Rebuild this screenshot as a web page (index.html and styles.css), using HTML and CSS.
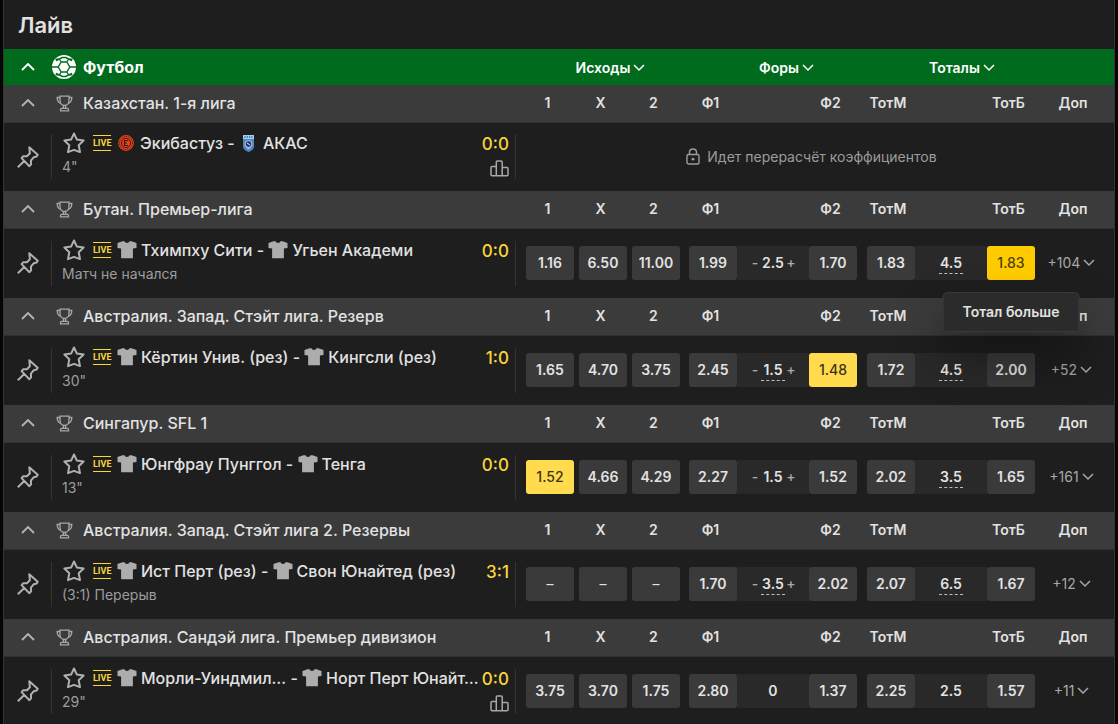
FILE: index.html
```html
<!DOCTYPE html>
<html lang="ru">
<head>
<meta charset="utf-8">
<meta name="viewport" content="width=device-width, initial-scale=1">
<title>Лайв</title>
<link rel="stylesheet" href="styles.css">
</head>
<body>
<svg class="sprite" aria-hidden="true">
  <symbol id="up" viewBox="0 0 14 8"><path d="M1 7l6-6 6 6" fill="none" stroke="currentColor" stroke-width="1.8"/></symbol>
  <symbol id="down" viewBox="0 0 12 8"><path d="M1 1l5 5 5-5" fill="none" stroke="currentColor" stroke-width="1.5"/></symbol>
  <symbol id="cup" viewBox="0 0 17 17"><g fill="none" stroke="currentColor" stroke-width="1.3"><path d="M4 1.2h9v4.3c0 3-2 5-4.500 5S4 8.500 4 5.500z"/><path d="M4 2.500H1.200c0 3.300 1 5.200 3.800 6M13 2.500h2.800c0 3.300-1 5.200-3.800 6M7.400 10.500v2.600M9.600 10.500v2.600M4.500 15.800v-1.300q0-1.200 1.200-1.200h5.600q1.200 0 1.200 1.200v1.300z"/></g></symbol>
  <symbol id="pin" viewBox="0 0 22 22"><path d="M12.300 1.300l8.400 7.500-1 1.700-2.900.7-2.900 3.400.2 3.700-1.700 1.900-7.800-8.100 1.700-1.900 3.600.1 3-3zM7.800 14.600l-7 6.600" fill="none" stroke="currentColor" stroke-width="2" stroke-linejoin="round"/></symbol>
  <symbol id="star" viewBox="0 0 22 22"><path d="M11 1.500l2.900 6.100 6.700.9-4.900 4.700 1.300 6.900-6-2.200-6 2.200 1.300-6.900L1.400 8.500l6.700-.9z" fill="none" stroke="currentColor" stroke-width="2" stroke-linejoin="round"/></symbol>
  <symbol id="shirt" viewBox="0 0 20 18"><path d="M5.500.3h2q.5 1.700 2.500 1.700T12.500.3h2L19.500 2v5l-3.600.4v9.900H4.100V7.400L.5 7V2z" fill="currentColor"/></symbol>
  <symbol id="bars" viewBox="0 0 19 17"><path d="M6.300 15.800V2q0-1 1-1h3.900q1 0 1 1v13.800M6.300 6.500H2q-1 0-1 1v7.300q0 1 1 1h15q1 0 1-1V8.500q0-1-1-1h-4.800" fill="none" stroke="currentColor" stroke-width="1.500"/></symbol>
</svg>
<main class="panel">
<h1 class="title">Лайв</h1>
<table class="line">
<colgroup><col><col class="c-odd"><col class="c-odd"><col class="c-odd"><col class="c-first"><col class="c-param"><col class="c-last"><col class="c-first2"><col class="c-param"><col class="c-last"><col class="c-more"></colgroup>
<thead>
<tr class="sport">
  <th><div class="heading"><button class="toggle" aria-label="Свернуть"><svg class="i-up"><use href="#up"/></svg></button><svg class="i-ball" viewBox="0 0 24 24"><circle cx="12" cy="12" r="12" fill="#fff"/><g fill="none" stroke="#006b1d" stroke-width="1.400"><path d="M9.200 7h5.600l3 5-3 5H9.200l-3-5zM9.200 7L7.300 4M14.800 7l1.900-3M17.800 12H24M14.800 17l1.900 3M9.200 17l-1.900 3M6.200 12H0M7.300 4l3-1.500h3.400l3 1.500M7.300 20l3 1.500h3.400l3-1.500M7.300 4L4 5.500M16.700 4L20 5.500M7.300 20L4 18.500M16.700 20l3.300-1.500"/></g><path d="M3.300 3.800l3.500-.6-2.600 3zM20.700 3.800l-3.500-.6 2.600 3zM3.300 20.200l3.500.6-2.600-3zM20.700 20.200l-3.500.6 2.600-3z" fill="#006b1d"/></svg><span>Футбол</span></div></th>
  <th colspan="3" class="g1"><button class="menu">Исходы<svg class="i-down"><use href="#down"/></svg></button></th>
  <th colspan="3" class="g2"><button class="menu">Форы<svg class="i-down"><use href="#down"/></svg></button></th>
  <th colspan="3" class="g3"><button class="menu">Тоталы<svg class="i-down"><use href="#down"/></svg></button></th>
  <th></th>
</tr>
</thead>
<tbody>
<tr class="league"><th><div class="heading"><button class="toggle" aria-label="Свернуть"><svg class="i-up"><use href="#up"/></svg></button><svg class="i-cup"><use href="#cup"/></svg><span>Казахстан. 1-я лига</span></div></th><th>1</th><th>X</th><th>2</th><th>Ф1</th><th></th><th>Ф2</th><th>ТотМ</th><th></th><th>ТотБ</th><th>Доп</th></tr>
<tr class="match closed"><td><div class="event"><button class="pin" aria-label="Закрепить"><svg><use href="#pin"/></svg></button><div class="info"><div class="names"><button class="star" aria-label="В избранное"><svg><use href="#star"/></svg></button><span class="live">LIVE</span><a href="#m1"><svg class="i-crest" viewBox="0 0 16 16"><circle cx="8" cy="8" r="7.900" fill="#e8431a"/><circle cx="8" cy="8" r="6.500" fill="none" stroke="#3a160e" stroke-width="1" stroke-dasharray="1.200 .8"/><circle cx="8" cy="8" r="4.600" fill="none" stroke="#3a160e" stroke-width="1"/><path d="M10 5.500H6.500v5H10M6.500 8H9" fill="none" stroke="#3a160e" stroke-width="1.200"/></svg><span>Экибастуз</span> - <svg class="i-shield" viewBox="0 0 11 17"><path d="M0 0h11v12q-.5 3-5.500 5Q.5 15 0 12z" fill="#4f86c4"/><path d="M0 0h11v4H0z" fill="#9fd0ee"/><path d="M2 1v2M4.300 1v2M6.700 1v2M9 1v2" stroke="#356aa8"/><circle cx="5.500" cy="9" r="3.400" fill="#25386d" stroke="#dce9f7" stroke-width=".8"/><path d="M4 8l3 2M4 12.500l1.500 1.500L7 12.500" stroke="#dce9f7" fill="none"/></svg><span class="away">АКАС</span></a></div><div class="state">4"</div></div><div class="result"><span class="score">0:0</span><button class="stats" aria-label="Статистика"><svg><use href="#bars"/></svg></button></div></div></td>
<td colspan="10"><div class="notice"><svg viewBox="0 0 14 17"><g fill="none" stroke="currentColor" stroke-width="1.400"><rect x="1" y="6.500" width="12" height="9.500" rx="1.500"/><path d="M3.500 6.500V4.200q0-3.200 3.500-3.200t3.500 3.200v2.300"/></g><circle cx="7" cy="11.200" r="1.400" fill="currentColor"/></svg>Идет перерасчёт коэффициентов</div></td></tr>
</tbody>
<tbody>
<tr class="league"><th><div class="heading"><button class="toggle" aria-label="Свернуть"><svg class="i-up"><use href="#up"/></svg></button><svg class="i-cup"><use href="#cup"/></svg><span>Бутан. Премьер-лига</span></div></th><th>1</th><th>X</th><th>2</th><th>Ф1</th><th></th><th>Ф2</th><th>ТотМ</th><th></th><th>ТотБ</th><th>Доп</th></tr>
<tr class="match"><td><div class="event"><button class="pin" aria-label="Закрепить"><svg><use href="#pin"/></svg></button><div class="info"><div class="names"><button class="star" aria-label="В избранное"><svg><use href="#star"/></svg></button><span class="live">LIVE</span><a href="#m2"><svg class="i-shirt"><use href="#shirt"/></svg><span>Тхимпху Сити</span> - <svg class="i-shirt"><use href="#shirt"/></svg><span>Угьен Академи</span></a></div><div class="state">Матч не начался</div></div><div class="result"><span class="score">0:0</span></div></div></td>
<td><button class="odd">1.16</button></td><td><button class="odd">6.50</button></td><td><button class="odd">11.00</button></td>
<td><button class="odd">1.99</button></td><td><div class="param"><button class="step" aria-label="Меньше">-</button><span class="value">2.5</span><button class="step" aria-label="Больше">+</button></div></td><td><button class="odd">1.70</button></td>
<td><button class="odd">1.83</button></td><td><div class="param"><button class="value pick">4.5</button></div></td><td><div class="hovered"><button class="odd hot" aria-describedby="tip">1.83</button><div class="tip" id="tip" role="tooltip">Тотал больше</div></div></td>
<td><button class="more">+104<svg class="i-down"><use href="#down"/></svg></button></td></tr>
</tbody>
<tbody>
<tr class="league"><th><div class="heading"><button class="toggle" aria-label="Свернуть"><svg class="i-up"><use href="#up"/></svg></button><svg class="i-cup"><use href="#cup"/></svg><span>Австралия. Запад. Стэйт лига. Резерв</span></div></th><th>1</th><th>X</th><th>2</th><th>Ф1</th><th></th><th>Ф2</th><th>ТотМ</th><th></th><th>ТотБ</th><th>Доп</th></tr>
<tr class="match"><td><div class="event"><button class="pin" aria-label="Закрепить"><svg><use href="#pin"/></svg></button><div class="info"><div class="names"><button class="star" aria-label="В избранное"><svg><use href="#star"/></svg></button><span class="live">LIVE</span><a href="#m3"><svg class="i-shirt"><use href="#shirt"/></svg><span>Кёртин Унив. (рез)</span> - <svg class="i-shirt"><use href="#shirt"/></svg><span>Кингсли (рез)</span></a></div><div class="state">30"</div></div><div class="result"><span class="score">1:0</span></div></div></td>
<td><button class="odd">1.65</button></td><td><button class="odd">4.70</button></td><td><button class="odd">3.75</button></td>
<td><button class="odd">2.45</button></td><td><div class="param"><button class="step" aria-label="Меньше">-</button><button class="value pick">1.5</button><button class="step" aria-label="Больше">+</button></div></td><td><button class="odd chosen">1.48</button></td>
<td><button class="odd">1.72</button></td><td><div class="param"><button class="value pick">4.5</button></div></td><td><button class="odd">2.00</button></td>
<td><button class="more">+52<svg class="i-down"><use href="#down"/></svg></button></td></tr>
</tbody>
<tbody>
<tr class="league"><th><div class="heading"><button class="toggle" aria-label="Свернуть"><svg class="i-up"><use href="#up"/></svg></button><svg class="i-cup"><use href="#cup"/></svg><span>Сингапур. SFL 1</span></div></th><th>1</th><th>X</th><th>2</th><th>Ф1</th><th></th><th>Ф2</th><th>ТотМ</th><th></th><th>ТотБ</th><th>Доп</th></tr>
<tr class="match"><td><div class="event"><button class="pin" aria-label="Закрепить"><svg><use href="#pin"/></svg></button><div class="info"><div class="names"><button class="star" aria-label="В избранное"><svg><use href="#star"/></svg></button><span class="live">LIVE</span><a href="#m4"><svg class="i-shirt"><use href="#shirt"/></svg><span>Юнгфрау Пунггол</span> - <svg class="i-shirt"><use href="#shirt"/></svg><span>Тенга</span></a></div><div class="state">13"</div></div><div class="result"><span class="score">0:0</span></div></div></td>
<td><button class="odd chosen">1.52</button></td><td><button class="odd">4.66</button></td><td><button class="odd">4.29</button></td>
<td><button class="odd">2.27</button></td><td><div class="param"><button class="step" aria-label="Меньше">-</button><span class="value">1.5</span><button class="step" aria-label="Больше">+</button></div></td><td><button class="odd">1.52</button></td>
<td><button class="odd">2.02</button></td><td><div class="param"><button class="value pick">3.5</button></div></td><td><button class="odd">1.65</button></td>
<td><button class="more">+161<svg class="i-down"><use href="#down"/></svg></button></td></tr>
</tbody>
<tbody>
<tr class="league"><th><div class="heading"><button class="toggle" aria-label="Свернуть"><svg class="i-up"><use href="#up"/></svg></button><svg class="i-cup"><use href="#cup"/></svg><span>Австралия. Запад. Стэйт лига 2. Резервы</span></div></th><th>1</th><th>X</th><th>2</th><th>Ф1</th><th></th><th>Ф2</th><th>ТотМ</th><th></th><th>ТотБ</th><th>Доп</th></tr>
<tr class="match"><td><div class="event"><button class="pin" aria-label="Закрепить"><svg><use href="#pin"/></svg></button><div class="info"><div class="names"><button class="star" aria-label="В избранное"><svg><use href="#star"/></svg></button><span class="live">LIVE</span><a href="#m5"><svg class="i-shirt"><use href="#shirt"/></svg><span>Ист Перт (рез)</span> - <svg class="i-shirt"><use href="#shirt"/></svg><span>Свон Юнайтед (рез)</span></a></div><div class="state">(3:1) Перерыв</div></div><div class="result"><span class="score">3:1</span></div></div></td>
<td><button class="odd none">–</button></td><td><button class="odd none">–</button></td><td><button class="odd none">–</button></td>
<td><button class="odd">1.70</button></td><td><div class="param"><button class="step" aria-label="Меньше">-</button><button class="value pick">3.5</button><button class="step" aria-label="Больше">+</button></div></td><td><button class="odd">2.02</button></td>
<td><button class="odd">2.07</button></td><td><div class="param"><button class="value pick">6.5</button></div></td><td><button class="odd">1.67</button></td>
<td><button class="more">+12<svg class="i-down"><use href="#down"/></svg></button></td></tr>
</tbody>
<tbody>
<tr class="league"><th><div class="heading"><button class="toggle" aria-label="Свернуть"><svg class="i-up"><use href="#up"/></svg></button><svg class="i-cup"><use href="#cup"/></svg><span>Австралия. Сандэй лига. Премьер дивизион</span></div></th><th>1</th><th>X</th><th>2</th><th>Ф1</th><th></th><th>Ф2</th><th>ТотМ</th><th></th><th>ТотБ</th><th>Доп</th></tr>
<tr class="match"><td><div class="event"><button class="pin" aria-label="Закрепить"><svg><use href="#pin"/></svg></button><div class="info"><div class="names"><button class="star" aria-label="В избранное"><svg><use href="#star"/></svg></button><span class="live">LIVE</span><a href="#m6"><svg class="i-shirt"><use href="#shirt"/></svg><span>Морли-Уиндмил…</span> - <svg class="i-shirt"><use href="#shirt"/></svg><span>Норт Перт Юнайт…</span></a></div><div class="state">29"</div></div><div class="result"><span class="score">0:0</span><button class="stats" aria-label="Статистика"><svg><use href="#bars"/></svg></button></div></div></td>
<td><button class="odd">3.75</button></td><td><button class="odd">3.70</button></td><td><button class="odd">1.75</button></td>
<td><button class="odd">2.80</button></td><td><div class="param"><span class="value">0</span></div></td><td><button class="odd">1.37</button></td>
<td><button class="odd">2.25</button></td><td><div class="param"><span class="value">2.5</span></div></td><td><button class="odd">1.57</button></td>
<td><button class="more">+11<svg class="i-down"><use href="#down"/></svg></button></td></tr>
</tbody>
</table>
</main>
</body>
</html>
```
FILE: styles.css
```css
* { box-sizing: border-box; }
body {
  margin: 0;
  padding: 0 3px;
  background: #060606;
  color: #e2e2e2;
  font: 500 16px/24px Inter, "Noto Sans", sans-serif;
}
button {
  margin: 0;
  padding: 0;
  border: 0;
  background: none;
  color: inherit;
  font: inherit;
  cursor: pointer;
}
a { color: inherit; text-decoration: none; }
svg { display: block; flex: none; }
.sprite { position: absolute; width: 0; height: 0; }
.panel {
  min-height: 100vh;
  border: 1px solid #343434;
  border-width: 0 1px;
  background: #1e1e1e;
}
.title {
  margin: 0;
  padding: 13px 14px 12px;
  font-size: 22px;
  line-height: 24px;
  font-weight: 600;
}
.line { width: 100%; table-layout: fixed; border-collapse: collapse; }
.c-odd { width: 53px; }
.c-first { width: 57px; }
.c-first2 { width: 58px; }
.c-param { width: 72px; }
.c-last { width: 48px; }
.c-more { width: 79px; }
th, td { padding: 0; }

.sport { height: 36px; background: #006b1d; color: #fff; }
.sport .g1 { padding-left: 20px; }
.sport .g2 { padding-left: 36px; }
.sport .g3 { padding-left: 32px; }
.menu { display: inline-flex; align-items: center; gap: 3px; font-size: 14px; font-weight: 600; }
.heading { display: flex; align-items: center; text-align: left; font-weight: 500; white-space: nowrap; }
.sport .heading { font-weight: 700; }
.toggle { width: 48px; height: 24px; padding-left: 17px; }
.i-up { width: 14px; height: 8px; }
.i-down { width: 12px; height: 8px; }
.i-ball { width: 24px; height: 24px; margin-right: 7px; }
.i-cup { width: 17px; height: 17px; margin: 0 10px 0 4px; color: #a8a8a8; }

.league { height: 37px; background: #3b3b3b; border-bottom: 1px solid #303030; }
.league th { font-size: 14px; line-height: 20px; font-weight: 600; text-align: center; }
.league th:nth-child(7), .league th:nth-child(10) { padding-right: 5px; }
.league th:nth-child(5) { padding-left: 4px; }
.league th:nth-child(8) { padding-left: 4px; }
.league th:nth-child(11) { padding-right: 3px; }
.league .heading { font-size: 16px; }
.league .toggle { color: #b4b4b4; }

.match { height: 70px; }
.match.closed { height: 69px; }
.match td { text-align: right; }
.event { display: flex; height: 45px; margin-right: 5px; border-right: 1px solid #333; }
.pin { display: flex; align-items: center; width: 48px; padding-left: 13px; border-right: 1px solid #333; color: #b0b0b0; }
.pin svg, .star svg { width: 22px; height: 22px; }
.info { flex: 1; min-width: 0; padding-left: 10px; text-align: left; }
.names, .names a { display: flex; align-items: center; white-space: pre; }
.names { height: 24px; margin: -3px 0 0 1px; }
.star { margin-right: 8px; color: #b0b0b0; }
.live {
  width: 18px;
  height: 16px;
  margin-right: 6px;
  border: 1px solid #fbd43b;
  border-width: 1px 0;
  color: #fbd43b;
  font: 700 9px/15px Roboto, sans-serif;
}
.i-shirt { width: 20px; height: 18px; margin-right: 4px; color: #adadad; }
.i-crest { width: 16px; height: 16px; margin: 0 6px 0 1px; }
.i-shield { width: 11px; height: 17px; margin: 0 9px 0 4px; }
.state { margin-top: 1px; color: #9c9c9c; font-size: 14px; line-height: 22px; font-weight: 400; }
.result { display: flex; flex-direction: column; align-items: flex-end; padding-right: 6px; }
.score { margin-top: -2px; color: #fbd43b; font-size: 17px; line-height: 24px; }
.stats { margin-top: 4px; color: #a8a8a8; }
.stats svg { width: 19px; height: 17px; }
.notice { display: flex; align-items: center; justify-content: center; gap: 7px; padding-right: 12px; color: #9c9c9c; font-size: 14px; font-weight: 400; }
.notice svg { width: 14px; height: 17px; }

.odd { width: 48px; height: 34px; border-radius: 3px; background: #3a3a3a; color: #e2e2e2; font-size: 14px; font-weight: 600; vertical-align: middle; }
.odd.chosen { background: #ffdb4d; color: #3a3416; font-weight: 500; }
.odd.hot { background: #ffcc00; color: #4d4008; font-weight: 500; }
.odd.none { font-weight: 400; }
.param { display: flex; align-items: center; justify-content: center; height: 34px; background: #292929; }
.value { min-width: 24px; font-size: 14px; line-height: 20px; font-weight: 600; text-align: center; }
.value.pick { border-bottom: 1px dashed #bdbdbd; }
.step { width: 12px; color: #ababab; font-size: 14px; }
.more { display: flex; align-items: center; justify-content: center; gap: 3px; width: 100%; padding-right: 6px; color: #a8a8a8; font-size: 14px; font-weight: 400; }
.hovered { position: relative; }
.tip {
  position: absolute;
  z-index: 2;
  top: 46px;
  left: 50%;
  transform: translateX(-50%);
  padding: 8px 19px;
  border: 1px solid #3a3a3a;
  border-radius: 5px;
  background: #2b2b2b;
  box-shadow: 0 24px 48px rgba(0, 0, 0, .4);
  font-size: 14px;
  line-height: 22px;
  font-weight: 600;
  white-space: nowrap;
}
```
